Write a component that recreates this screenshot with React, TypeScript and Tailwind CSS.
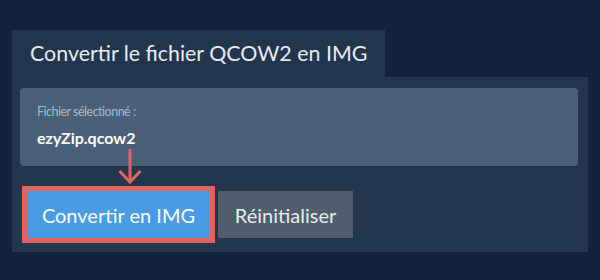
import React from "react";

export default function App() {
  return (
    <div
      className="w-[600px] h-[280px] bg-[#11223a] pt-[30px] pl-3 pr-3"
      style={{ fontFamily: "Lato, 'Open Sans', sans-serif" }}
    >
      <div className="w-[373px] h-[47px] bg-[#22364d] flex items-center pl-[18px]">
        <h2 className="text-[21.4px] text-[#e6ebf0] leading-none">Convertir le fichier QCOW2 en IMG</h2>
      </div>

      <div className="bg-[#22364d] pt-[11px] pl-2 pr-[10px] pb-[14px]">
        <div className="h-[78px] bg-[#4a6078] rounded pl-[17px] pt-[18px]">
          <div className="text-[12.5px] tracking-[-0.5px] text-[#a9b6c4] leading-none">Fichier sélectionné :</div>
          <div className="text-[16px] font-bold text-white leading-none mt-[11px]">ezyZip.qcow2</div>
        </div>

        <div className="relative flex gap-2 mt-[25px] pl-[7px]">
          <svg
            className="absolute left-[98px] -top-[42px]"
            width="24"
            height="36"
            viewBox="0 0 24 36"
            fill="none"
            stroke="#e06560"
            strokeWidth="3"
          >
            <path d="M12 0 V33" />
            <path d="M1.5 22 L12 33 L22.5 22" />
          </svg>
          <button className="h-[47px] w-[183px] bg-[#4a9be6] text-white text-[20px] outline-[5px] outline-solid outline-[#e06560]">
            Convertir en IMG
          </button>
          <button className="h-[47px] w-[135px] bg-[#4f5d6d] text-[#e8ecf0] text-[20px]">
            Réinitialiser
          </button>
        </div>
      </div>
    </div>
  );
}
